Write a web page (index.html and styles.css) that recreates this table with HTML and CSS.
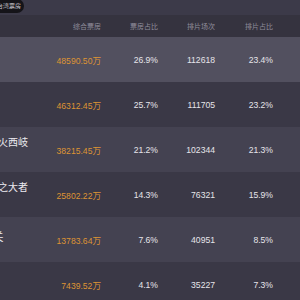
FILE: index.html
```html
<!DOCTYPE html>
<html lang="zh">
<head>
<meta charset="utf-8">
<link rel="stylesheet" href="styles.css">
</head>
<body>
<div class="top">
  <span class="pill">台湾票房</span>
</div>
<div class="table">
  <div class="row head">
    <div class="name">影片</div>
    <div class="c">综合票房</div>
    <div class="c">票房占比</div>
    <div class="c">排片场次</div>
    <div class="c last">排片占比</div>
  </div>
  <div class="row r1">
    <div class="name"><span class="title">热辣滚烫</span></div>
    <div class="c money">48590.50万</div>
    <div class="c">26.9%</div>
    <div class="c">112618</div>
    <div class="c last">23.4%</div>
  </div>
  <div class="row r2">
    <div class="name"><span class="title">飞驰人生2</span></div>
    <div class="c money">46312.45万</div>
    <div class="c">25.7%</div>
    <div class="c">111705</div>
    <div class="c last">23.2%</div>
  </div>
  <div class="row r3">
    <div class="name"><span class="title">封神第二部：战火西岐</span><span class="sub">上映第1天</span></div>
    <div class="c money">38215.45万</div>
    <div class="c">21.2%</div>
    <div class="c">102344</div>
    <div class="c last">21.3%</div>
  </div>
  <div class="row r4">
    <div class="name"><span class="title">射雕英雄传：侠之大者</span><span class="sub">上映第1天</span></div>
    <div class="c money">25802.22万</div>
    <div class="c">14.3%</div>
    <div class="c">76321</div>
    <div class="c last">15.9%</div>
  </div>
  <div class="row r5">
    <div class="name"><span class="title one">勇闯天下第一关</span></div>
    <div class="c money">13783.64万</div>
    <div class="c">7.6%</div>
    <div class="c">40951</div>
    <div class="c last">8.5%</div>
  </div>
  <div class="row r6">
    <div class="name"><span class="title">熊出没</span></div>
    <div class="c money">7439.52万</div>
    <div class="c">4.1%</div>
    <div class="c">35227</div>
    <div class="c last">7.3%</div>
  </div>
</div>
</body>
</html>
```

FILE: styles.css
```css
html, body {
  margin: 0;
  padding: 0;
  background: #3c3a49;
  overflow: hidden;
  font-family: "Liberation Sans", "Noto Sans CJK SC", sans-serif;
  color: #e6e5ea;
}

.top {
  height: 15px;
  display: flex;
  align-items: flex-start;
}

.pill {
  margin-left: -6px;
  margin-top: -1px;
  height: 14px;
  padding: 0 3px;
  border-radius: 7px;
  background: #151419;
  color: #d2d1d8;
  font-size: 6px;
  line-height: 14px;
  font-family: "Noto Sans CJK SC", sans-serif;
  white-space: nowrap;
}

.table {
  margin-left: -80px;
}

.row {
  display: flex;
  align-items: center;
  height: 45px;
  font-size: 8.6px;
}

.row.head {
  height: 22px;
  background: #35333f;
  color: #8f8d9b;
  font-size: 7px;
  font-family: "Noto Sans CJK SC", sans-serif;
}

.r1 { background: #52505f; }
.r2 { background: #3a3846; }
.r3 { background: #444251; }
.r4 { background: #3a3846; }
.r5 { background: #444251; }
.r6 { background: #3a3846; }

.name {
  width: 124px;
  box-sizing: border-box;
  padding-left: 8px;
  display: flex;
  flex-direction: column;
  white-space: nowrap;
}

.title {
  font-size: 10px;
  line-height: 12px;
  color: #ecebf0;
  font-family: "Noto Sans CJK SC", sans-serif;
}

.title.one {
  margin-bottom: 7px;
  font-size: 10.8px;
}

.sub {
  font-size: 7px;
  line-height: 16px;
  color: #8f8d9b;
  font-family: "Noto Sans CJK SC", sans-serif;
}

.c {
  width: 57px;
  text-align: right;
  white-space: nowrap;
}

.c.last {
  width: 58px;
}

.money {
  color: #de9434;
}
```
